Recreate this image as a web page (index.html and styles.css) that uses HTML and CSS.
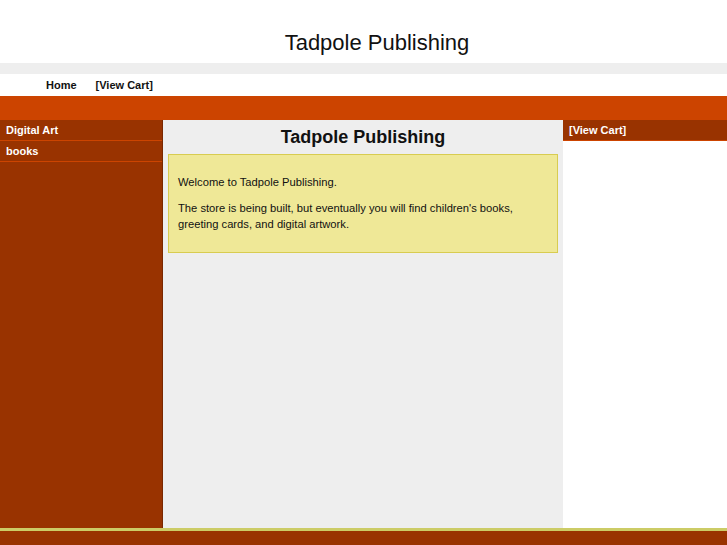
FILE: index.html
```html
<!DOCTYPE html>
<html>
<head>
<meta charset="utf-8">
<link rel="stylesheet" href="styles.css">
</head>
<body>
<div class="page">
  <header class="masthead"><h1 class="site-title">Tadpole Publishing</h1></header>
  <div class="greybar"></div>
  <nav class="topnav"><a href="#">Home</a><a href="#">[View Cart]</a></nav>
  <div class="orangebar"></div>
  <div class="main">
    <aside class="leftcol">
      <a class="cat" href="#">Digital Art</a>
      <a class="cat" href="#">books</a>
    </aside>
    <section class="content">
      <h2 class="content-title">Tadpole Publishing</h2>
      <div class="notice">
        <p>Welcome to Tadpole Publishing.</p>
        <p>The store is being built, but eventually you will find children's books, greeting cards, and digital artwork.</p>
      </div>
    </section>
    <aside class="rightcol">
      <div class="cart-head">[View Cart]</div>
    </aside>
  </div>
  <div class="footline"></div>
  <footer class="footer"></footer>
</div>
</body>
</html>
```

FILE: styles.css
```css
html, body {
  margin: 0;
  padding: 0;
  background: #fff;
  font-family: "Liberation Sans", Arial, sans-serif;
  color: #111;
}
.page {
  display: flex;
  flex-direction: column;
  width: 727px;
  height: 545px;
  overflow: hidden;
}
.masthead {
  height: 63px;
  display: flex;
  justify-content: center;
  padding-left: 27px;
  box-sizing: border-box;
}
.site-title {
  margin: 30px 0 0;
  font-size: 22px;
  font-weight: normal;
  line-height: 25px;
  color: #111;
}
.greybar {
  height: 11px;
  background: #eeeeee;
}
.topnav {
  height: 22px;
  display: flex;
  align-items: center;
  gap: 19px;
  padding-left: 46px;
}
.topnav a {
  font-size: 11px;
  font-weight: bold;
  color: #111;
  text-decoration: none;
}
.orangebar {
  height: 24px;
  background: #cc4400;
}
.main {
  display: flex;
  height: 408px;
}
.leftcol {
  width: 162px;
  background: #993300;
  border-right: 1px solid #7a2800;
  display: flex;
  flex-direction: column;
}
.cat {
  display: block;
  height: 20px;
  line-height: 20px;
  padding-left: 6px;
  border-bottom: 1px solid #cc4400;
  color: #fff;
  font-size: 11px;
  font-weight: bold;
  text-decoration: none;
}
.content {
  width: 400px;
  background: #eeeeee;
  padding: 0 5px;
  box-sizing: border-box;
}
.content-title {
  margin: 6px 0 0;
  text-align: center;
  font-size: 18px;
  font-weight: bold;
  line-height: 22px;
  color: #111;
}
.notice {
  margin-top: 6px;
  height: 99px;
  box-sizing: border-box;
  background: #efe897;
  border: 1px solid #d8cc50;
  padding: 19px 9px 0;
}
.notice p {
  margin: 0 0 10px;
  font-size: 11.2px;
  line-height: 16px;
  color: #111;
}
.rightcol {
  flex: 1;
  background: #fff;
}
.cart-head {
  height: 20px;
  line-height: 20px;
  padding-left: 6px;
  background: #993300;
  border-bottom: 1px solid #cc4400;
  color: #fff;
  font-size: 11px;
  font-weight: bold;
}
.footline {
  height: 3px;
  background: #cccc66;
}
.footer {
  flex: 1;
  background: #993300;
}
```
